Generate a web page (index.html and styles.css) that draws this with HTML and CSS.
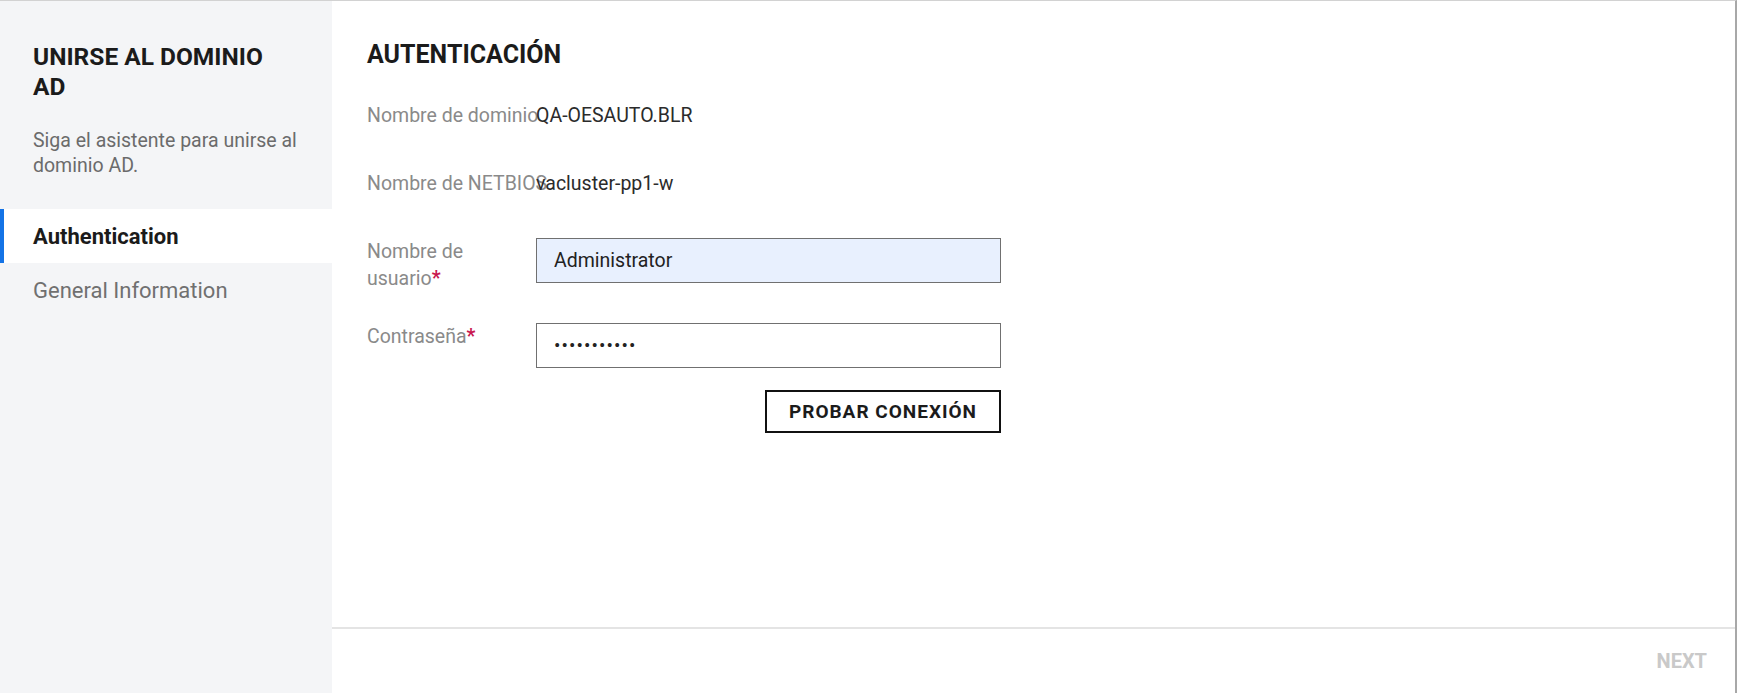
FILE: index.html
```html
<!DOCTYPE html>
<html lang="es">
<head>
    <meta charset="UTF-8">
    <meta name="viewport" content="width=device-width, initial-scale=1.0">
    <title>Unirse al dominio AD</title>
    <link rel="stylesheet" href="styles.css">
</head>
<body>

<div class="wizard">
    <!-- Steps -->
    <aside class="wizard-sidebar">
        <h1>UNIRSE AL DOMINIO AD</h1>
        <p class="wizard-desc">Siga el asistente para unirse al dominio AD.</p>
        <ul class="steps">
            <li class="step active">Authentication</li>
            <li class="step">General Information</li>
        </ul>
    </aside>

    <div class="wizard-main">
        <div class="wizard-body">
            <h2>AUTENTICACIÓN</h2>

            <div class="form-row info">
                <span class="form-label">Nombre de dominio</span>
                <span class="form-value">QA-OESAUTO.BLR</span>
            </div>
            <div class="form-row info">
                <span class="form-label">Nombre de NETBIOS</span>
                <span class="form-value">vacluster-pp1-w</span>
            </div>

            <div class="form-row field user-row">
                <label class="form-label" for="username">Nombre de usuario<span class="req">*</span></label>
                <input id="username" class="text-input autofilled" type="text" value="Administrator">
            </div>
            <div class="form-row field">
                <label class="form-label" for="password">Contraseña<span class="req">*</span></label>
                <input id="password" class="text-input" type="password" value="xxxxxxxxxxx">
            </div>

            <div class="form-actions">
                <button class="btn-outline">PROBAR CONEXIÓN</button>
            </div>
        </div>

        <div class="wizard-footer">
            <button class="btn-text" disabled>NEXT</button>
        </div>
    </div>
</div>

</body>
</html>
```

FILE: styles.css
```css
/* General Styles */
body {
    margin: 0;
    font-family: Roboto, "Liberation Sans", Arial, sans-serif;
    background-color: #ffffff;
}

.wizard {
    display: flex;
    height: 693px;
    box-sizing: border-box;
    border-top: 1px solid #d2d2d2;
    border-right: 2px solid #a8a8a8;
}

/* Sidebar */
.wizard-sidebar {
    width: 332px;
    flex-shrink: 0;
    background-color: #f4f5f7;
    padding-top: 41px;
}

.wizard-sidebar h1 {
    margin: 0 40px 0 33px;
    font-size: 24.5px;
    line-height: 30px;
    font-weight: 700;
    color: #1b1b1b;
}

.wizard-desc {
    margin: 26px 30px 0 33px;
    font-size: 19.5px;
    line-height: 25px;
    color: #6b6b6b;
}

.steps {
    list-style: none;
    margin: 31px 0 0 0;
    padding: 0;
}

.step {
    height: 54px;
    display: flex;
    align-items: center;
    padding-left: 33px;
    font-size: 22px;
    color: #707070;
}

.step.active {
    background-color: #ffffff;
    border-left: 4px solid #1473e6;
    padding-left: 29px;
    font-weight: 700;
    color: #1b1b1b;
}

/* Main area */
.wizard-main {
    flex: 1;
    display: flex;
    flex-direction: column;
}

.wizard-body {
    flex: 1;
    padding: 39px 0 0 35px;
}

.wizard-body h2 {
    margin: 0 0 32px 0;
    font-size: 25px;
    line-height: 30px;
    font-weight: 700;
    color: #1b1b1b;
}

.form-row {
    display: grid;
    grid-template-columns: 169px 465px;
    font-size: 19.5px;
    line-height: 27px;
}

.form-row.info {
    margin-bottom: 41px;
    white-space: nowrap;
}

.user-row {
    margin-bottom: 31px;
}

.form-label {
    color: #8a8a8a;
    padding-right: 12px;
}

.form-row.info .form-label {
    padding-right: 0;
}

.form-value {
    color: #2b2b2b;
}

.req {
    color: #c8174f;
    font-weight: 700;
}

.text-input {
    height: 45px;
    box-sizing: border-box;
    border: 1px solid #707070;
    border-radius: 0;
    padding: 0 17px;
    font-family: inherit;
    font-size: 19.5px;
    color: #222222;
    background-color: #ffffff;
    outline: none;
}

.text-input.autofilled {
    background-color: #e8f0fe;
}

.text-input[type="password"] {
    font-size: 19px;
    letter-spacing: 1.1px;
}

.form-actions {
    width: 634px;
    display: flex;
    justify-content: flex-end;
    margin-top: 22px;
}

.btn-outline {
    width: 236px;
    height: 43px;
    border: 2px solid #111111;
    background-color: #ffffff;
    font-family: inherit;
    font-size: 19px;
    font-weight: 700;
    letter-spacing: 1px;
    color: #1b1b1b;
    cursor: pointer;
}

/* Footer */
.wizard-footer {
    height: 64px;
    border-top: 2px solid #e4e4e4;
    display: flex;
    align-items: center;
    justify-content: flex-end;
    padding-right: 28px;
}

.btn-text {
    border: none;
    background: none;
    padding: 0;
    font-family: inherit;
    font-size: 20px;
    font-weight: 700;
    color: #c9c9c9;
}
```
